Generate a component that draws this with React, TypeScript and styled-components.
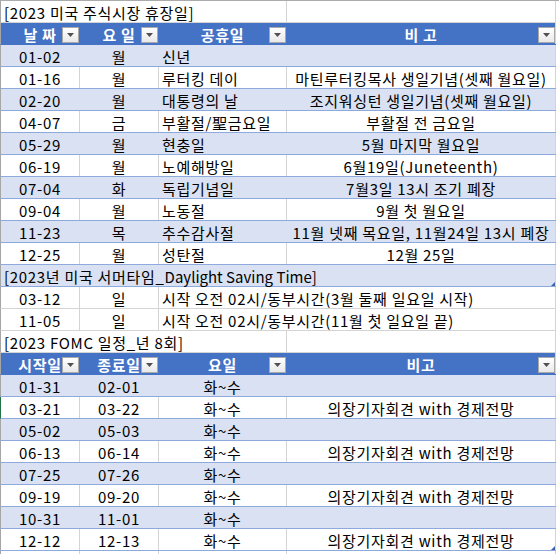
import React from 'react';
import styled, { createGlobalStyle, css } from 'styled-components';

const GRID = '#d4d4d4';
const TABLE_LINE = '#8ea9db';
const HEAD_BLUE = '#4472c4';
const BAND = '#d9e1f2';

const GlobalStyle = createGlobalStyle`
  html, body {
    margin: 0;
    padding: 0;
    background: #fff;
  }
  body {
    font-family: "Noto Sans CJK KR", "Noto Sans", sans-serif;
    font-size: 15px;
    letter-spacing: 0.7px;
    color: #000;
  }
`;

const Sheet = styled.div`
  width: 559px;
  height: 554px;
  box-sizing: border-box;
  border-top: 1px solid #ababab;
  overflow: hidden;
  background: #fff;
`;

type RowKind = 'plain' | 'band' | 'head' | 'loose' | 'tail';

const lineFor: Record<RowKind, string> = {
  plain: GRID,
  band: BAND,
  head: HEAD_BLUE,
  loose: GRID,
  tail: GRID,
};

const bottomFor: Record<RowKind, string> = {
  plain: TABLE_LINE,
  band: TABLE_LINE,
  head: HEAD_BLUE,
  loose: GRID,
  tail: 'transparent',
};

const Row = styled.div<{ $kind: RowKind; $selected?: boolean }>`
  --line: ${p => lineFor[p.$kind]};
  display: grid;
  grid-template-columns: 79px 79px 128px 269px;
  width: 556px;
  height: ${p => (p.$kind === 'tail' ? '4px' : '22px')};
  box-sizing: border-box;
  border-left: 1px solid ${p => (p.$selected ? '#217346' : '#a6a6a6')};
  border-bottom: 1px solid ${p => bottomFor[p.$kind]};
  background: ${p => (p.$kind === 'band' ? BAND : p.$kind === 'head' ? HEAD_BLUE : '#fff')};
  color: ${p => (p.$kind === 'head' ? '#fff' : '#000')};
  font-weight: ${p => (p.$kind === 'head' ? 700 : 400)};

  & > *:last-child {
    border-right-color: ${GRID};
  }
`;

const Cell = styled.div<{ $align?: 'left' | 'center'; $span?: number; $handle?: boolean }>`
  position: relative;
  display: flex;
  align-items: center;
  justify-content: ${p => (p.$align === 'left' ? 'flex-start' : 'center')};
  padding: 1px 3px 0;
  box-sizing: border-box;
  border-right: 1px solid var(--line);
  white-space: nowrap;
  line-height: 1;
  grid-column: span ${p => p.$span ?? 1};

  ${p =>
    p.$handle &&
    css`
      &::after {
        content: '';
        position: absolute;
        right: 0;
        bottom: 0;
        width: 0;
        height: 0;
        border-left: 4px solid transparent;
        border-bottom: 4px solid #3a62ad;
      }
    `}
`;

// latin words in the sheet font run tighter than the hangul
const Latin = styled.span`
  letter-spacing: 0;
  white-space: pre;
`;

const FilterButton = styled.span`
  position: absolute;
  right: 0;
  bottom: 1px;
  width: 17px;
  height: 16px;
  box-sizing: border-box;
  border: 1px solid #a9a9a9;
  background: linear-gradient(#ffffff, #e9e9e9);
  display: flex;
  align-items: center;
  justify-content: center;
`;

const Filter = () => (
  <FilterButton>
    <svg width="7" height="4" viewBox="0 0 7 4">
      <polygon points="0,0 7,0 3.5,4" fill="#505050" />
    </svg>
  </FilterButton>
);

const HeadCell: React.FC<{ label: string }> = ({ label }) => (
  <Cell>
    {label}
    <Filter />
  </Cell>
);

const holidays: [string, string, string, string][] = [
  ['01-02', '월', '신년', ''],
  ['01-16', '월', '루터킹 데이', '마틴루터킹목사 생일기념(셋째 월요일)'],
  ['02-20', '월', '대통령의 날', '조지워싱턴 생일기념(셋째 월요일)'],
  ['04-07', '금', '부활절/聖금요일', '부활절 전 금요일'],
  ['05-29', '월', '현충일', '5월 마지막 월요일'],
  ['06-19', '월', '노예해방일', '6월19일(Juneteenth)'],
  ['07-04', '화', '독립기념일', '7월3일 13시 조기 폐장'],
  ['09-04', '월', '노동절', '9월 첫 월요일'],
  ['11-23', '목', '추수감사절', '11월 넷째 목요일, 11월24일 13시 폐장'],
  ['12-25', '월', '성탄절', '12월 25일'],
];

const summerTime: [string, string, string][] = [
  ['03-12', '일', '시작 오전 02시/동부시간(3월 둘째 일요일 시작)'],
  ['11-05', '일', '시작 오전 02시/동부시간(11월 첫 일요일 끝)'],
];

const PRESS = '의장기자회견 with 경제전망';

const fomc: [string, string, string, string][] = [
  ['01-31', '02-01', '화~수', ''],
  ['03-21', '03-22', '화~수', PRESS],
  ['05-02', '05-03', '화~수', ''],
  ['06-13', '06-14', '화~수', PRESS],
  ['07-25', '07-26', '화~수', ''],
  ['09-19', '09-20', '화~수', PRESS],
  ['10-31', '11-01', '화~수', ''],
  ['12-12', '12-13', '화~수', PRESS],
];

export default function App() {
  return (
    <>
      <GlobalStyle />
      <Sheet>
        <Row $kind="loose">
          <Cell $align="left" $span={3}>[2023 미국 주식시장 휴장일]</Cell>
          <Cell />
        </Row>
        <Row $kind="head">
          <HeadCell label="날 짜" />
          <HeadCell label="요 일" />
          <HeadCell label="공휴일" />
          <HeadCell label="비 고" />
        </Row>
        {holidays.map(([date, day, name, note], i) => (
          <Row key={date} $kind={i % 2 === 0 ? 'band' : 'plain'}>
            <Cell>{date}</Cell>
            <Cell>{day}</Cell>
            <Cell $align="left">{name}</Cell>
            <Cell>{note}</Cell>
          </Row>
        ))}
        <Row $kind="band">
          <Cell $align="left" $span={4} $handle>
            [2023년 미국 서머타임_<Latin>Daylight Saving Time</Latin>]
          </Cell>
        </Row>
        {summerTime.map(([date, day, note]) => (
          <Row key={date} $kind="loose">
            <Cell>{date}</Cell>
            <Cell>{day}</Cell>
            <Cell $align="left" $span={2}>{note}</Cell>
          </Row>
        ))}
        <Row $kind="loose">
          <Cell $align="left" $span={3}>[2023 FOMC 일정_년 8회]</Cell>
          <Cell />
        </Row>
        <Row $kind="head">
          <HeadCell label="시작일" />
          <HeadCell label="종료일" />
          <HeadCell label="요일" />
          <HeadCell label="비고" />
        </Row>
        {fomc.map(([start, end, days, note], i) => (
          <Row key={start} $kind={i % 2 === 0 ? 'band' : 'plain'} $selected={start === '03-21'}>
            <Cell>{start}</Cell>
            <Cell>{end}</Cell>
            <Cell>{days}</Cell>
            <Cell $handle={i === fomc.length - 1}>{note}</Cell>
          </Row>
        ))}
        <Row $kind="tail">
          <Cell />
          <Cell />
          <Cell />
          <Cell />
        </Row>
      </Sheet>
    </>
  );
}
